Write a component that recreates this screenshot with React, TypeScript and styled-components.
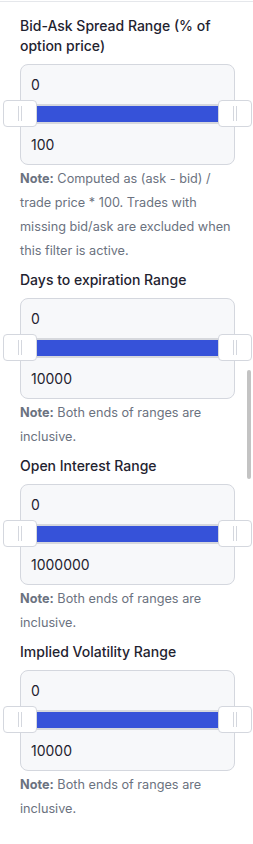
import React from 'react';
import styled, { createGlobalStyle } from "styled-components"

const GlobalStyle = createGlobalStyle`
  html, body {
    margin: 0;
    padding: 0;
    background: #ffffff;
  }
  body {
    font-family: Inter, "Noto Sans", sans-serif;
    -webkit-font-smoothing: antialiased;
  }
`

type RangeFilter = {
  label: string
  min: string
  max: string
  note: string
}

const filters: RangeFilter[] = [
  {
    label: "Bid-Ask Spread Range (% of option price)",
    min: "0",
    max: "100",
    note: "Computed as (ask - bid) / trade price * 100. Trades with missing bid/ask are excluded when this filter is active."
  },
  { label: "Days to expiration Range", min: "0", max: "10000", note: "Both ends of ranges are inclusive." },
  { label: "Open Interest Range", min: "0", max: "1000000", note: "Both ends of ranges are inclusive." },
  { label: "Implied Volatility Range", min: "0", max: "10000", note: "Both ends of ranges are inclusive." }
]

const RangeSlider: React.FC = () => (
  <SliderRow>
    <Track>
      <Fill />
    </Track>
    <Handle $side="left"><Grip /></Handle>
    <Handle $side="right"><Grip /></Handle>
  </SliderRow>
)

const App: React.FC = () => {
  return (
    <>
      <GlobalStyle />
      <Panel>
        {filters.map((f) => (
          <Section key={f.label}>
            <Label>{f.label}</Label>
            <RangeBox>
              <ValueRow>{f.min}</ValueRow>
              <RangeSlider />
              <ValueRow>{f.max}</ValueRow>
            </RangeBox>
            <Note><NoteLead>Note:</NoteLead> {f.note}</Note>
          </Section>
        ))}
      </Panel>
      <ScrollThumb />
    </>
  );
}

const Panel = styled.div`
  width: 253px;
  min-height: 844px;
  box-sizing: border-box;
  border-top: 1px solid #e5e7eb;
  margin-top: 1px;
  padding: 14px 18px 20px 20px;
  display: flex;
  flex-direction: column;
  gap: 7px;
`

const Section = styled.div`
  display: flex;
  flex-direction: column;
`

const Label = styled.div`
  font-size: 14px;
  line-height: 20px;
  font-weight: 500;
  color: #1f2330;
  margin-bottom: 8px;
`

const RangeBox = styled.div`
  box-sizing: border-box;
  height: 101px;
  border: 1px solid #d4d7de;
  border-radius: 8px;
  background: #f7f8fa;
  display: flex;
  flex-direction: column;
`

const ValueRow = styled.div`
  height: 40px;
  display: flex;
  align-items: center;
  padding-left: 10px;
  font-size: 14px;
  color: #1f2330;
  &:first-child {
    height: 39px;
  }
`

const SliderRow = styled.div`
  position: relative;
  height: 20px;
  margin: 0 -1px;
`

const Track = styled.div`
  height: 100%;
  box-sizing: border-box;
  padding: 2px 0;
  background: #d6d8dd;
`

const Fill = styled.div`
  height: 100%;
  margin: 0 17px;
  background: #3652d9;
`

const Handle = styled.div<{ $side: "left" | "right" }>`
  position: absolute;
  top: -4px;
  ${(p) => (p.$side === "left" ? "left: -17px;" : "right: -17px;")}
  width: 34px;
  height: 27px;
  box-sizing: border-box;
  background: #ffffff;
  border: 1px solid #d4d7de;
  border-radius: 4px;
  display: flex;
  align-items: center;
  justify-content: center;
`

const Grip = styled.div`
  width: 4px;
  height: 15px;
  box-sizing: border-box;
  border-left: 1px solid #d4d7de;
  border-right: 1px solid #d4d7de;
`

const Note = styled.div`
  margin-top: 2px;
  margin-right: -2px;
  font-size: 12.7px;
  line-height: 24px;
  color: #6b7280;
`

const NoteLead = styled.span`
  font-weight: 700;
`

const ScrollThumb = styled.div`
  position: fixed;
  right: 2px;
  top: 370px;
  width: 4px;
  height: 109px;
  border-radius: 2px;
  background: #c3c3c3;
`

export default App;
